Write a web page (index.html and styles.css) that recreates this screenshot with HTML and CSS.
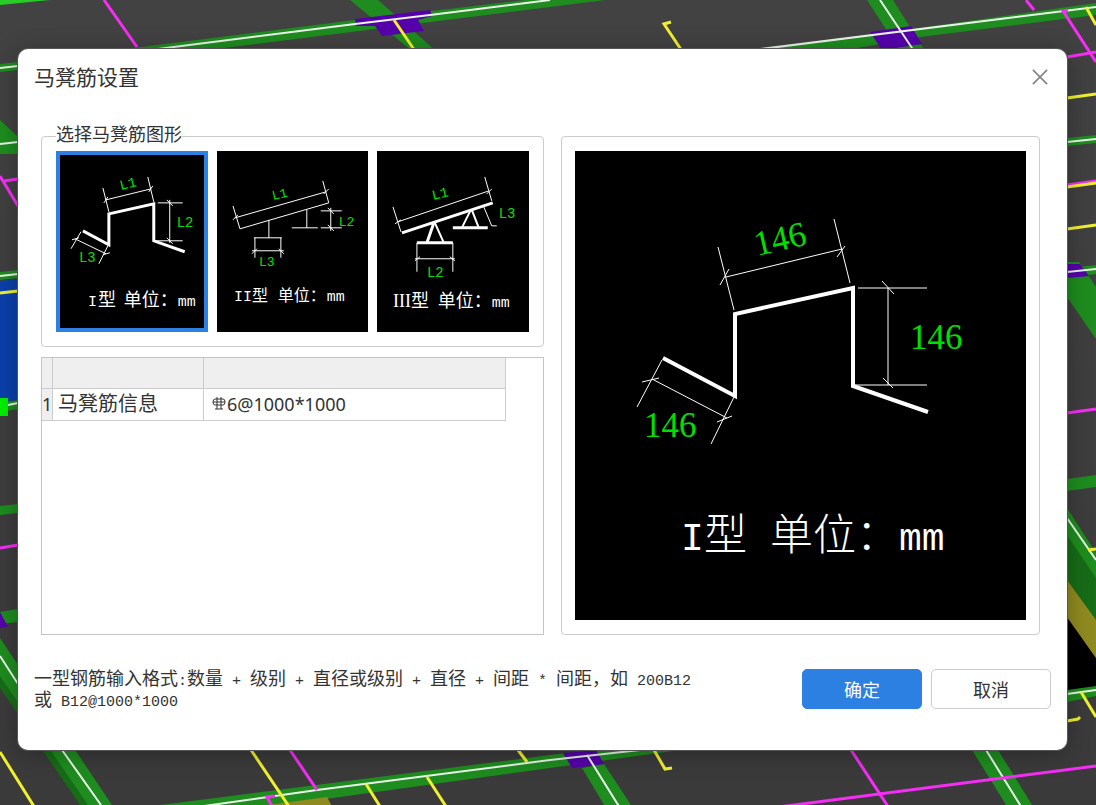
FILE: index.html
```html
<!DOCTYPE html>
<html lang="zh-CN">
<head>
<meta charset="utf-8">
<title>马凳筋设置</title>
<link rel="stylesheet" href="styles.css">
</head>
<body>
<svg class="scene" viewBox="0 0 1096 805" preserveAspectRatio="xMidYMid slice" aria-hidden="true">
  <g class="beam">
    <path d="M0 0H50L0 5Z" class="beam-bright"/>
    <path d="M350 0H378L436 51H412Z"/>
    <path d="M110 51L355 20L525 0H605L375 29L200 51Z"/>
    <path d="M867 0H893L925 51H900Z"/>
    <path d="M745 51L870 35L1096 3V15L920 37L840 51Z"/>
    <path d="M0 64L18 62V70L0 72Z"/>
    <path d="M0 120L18 137V154H0Z"/>
    <path d="M0 272L18 270V278L0 280Z"/>
    <path d="M0 402L18 400V409L0 412Z"/>
    <path d="M0 506L18 504V513L0 515Z"/>
    <path d="M0 612L18 609V622L0 624Z"/>
    <path d="M0 638L112 805H82L0 685Z"/>
    <path d="M145 807L550 755L590 750H680L550 768L340 797L260 808Z"/>
    <path d="M582 768L604 764L633 808H606Z"/>
    <path d="M972 750H998L1034 808H1008Z"/>
    <path d="M1067 138L1096 135V143L1067 146Z"/>
    <path d="M1067 268L1096 265V274L1067 278Z"/>
    <path d="M1067 262H1079L1096 287V339L1067 297Z"/>
    <path d="M1067 479L1096 475V487L1067 491Z"/>
    <path d="M1067 508L1096 553V620L1067 580Z"/>
    <path d="M1067 690L1096 685V696L1067 702Z"/>
  </g>
  <path class="beam-dark" d="M0 676L88 805H80L0 688ZM1067 535L1096 578V620L1067 580Z"/>
  <path fill="#000" d="M1067 617L1096 658V686L1067 690Z"/>
  <path class="olive" d="M1067 580L1096 620V658L1067 617ZM245 808L327 797L333 808Z"/>
  <path fill="#0b40aa" d="M0 281L18 279V400L0 402Z"/>
  <path class="column" d="M355 19L430 10L432 16L418 20L424 31L382 36L375 26H356ZM870 32L911 26L922 44L882 50ZM0 612L8 627L0 628ZM563 753L596 750L604 764L572 768ZM1067 264H1080L1089 276L1067 278Z"/>
  <g class="axis">
    <path d="M150 50L355 24L430 15L550 0M745 51L1096 7M880 0L914 51"/>
    <path d="M0 68L18 66M0 144L18 142M0 276L18 274M8 405L18 403M0 656L18 684M62 750L101 805"/>
    <path d="M190 808L317 790L550 760L640 750M587 755L620 808M986 750L1022 808"/>
    <path d="M1067 142L1096 139M1067 272L1096 269M1067 518L1096 560M1067 694L1096 690"/>
  </g>
  <g class="rebar-magenta">
    <path d="M104 0L137 47M1026 0L1034 10M1068 11H1063L1096 62M1067 57L1096 52M0 176L18 206M4 181L18 179M0 548L18 545"/>
    <path d="M290 750L317 790M275 796L267 797L273 808M851 750L889 808M763 809L1096 766M1067 185L1096 181M1067 413L1096 409"/>
  </g>
  <g class="rebar-yellow">
    <path d="M394 20L415 51M671 22L664 24L682 51M1086 7L1096 25M0 293L18 291M0 752L35 808M251 750L290 808M366 784L381 808"/>
    <path d="M427 777L447 808M518 750L527 762M654 750L665 769L672 768M1067 98L1096 94M1067 187L1096 183M1067 229L1096 225"/>
    <path d="M1067 721L1078 719L1080 717M1081 692L1096 717M1088 550L1096 549"/>
  </g>
  <path fill="#00f000" d="M0 398H8V416H0Z"/>
</svg>

<main class="dialog" role="dialog" aria-labelledby="dialog-title">
  <header class="dialog-header">
    <h1 class="dialog-title" id="dialog-title">马凳筋设置</h1>
    <button class="close" type="button" aria-label="关闭">
      <svg class="close-icon" viewBox="0 0 18 18"><path d="M1 1L17 17M17 1L1 17"/></svg>
    </button>
  </header>

  <div class="dialog-body">
    <div class="left">
      <fieldset class="shapes">
        <legend class="shapes-legend">选择马凳筋图形</legend>
        <div class="shape-list">
          <button class="shape shape-selected" type="button" aria-pressed="true">
            <svg class="drawing" viewBox="0 0 152 181">
              <path class="bar" d="M27 80L53 94V63L98 53V90L129 101"/>
              <path class="dim" d="M47 37L53 61M92 26L98 51M50 49L95 38M48 52L52 46M93 41L97 35M102 52H127M100 90H127M114 49V92M111 49L117 55M111 87L117 93"/>
              <path class="dim" d="M25 81L15 98M52 95L43 113M19 88L50 103M16 89L23 87M47 104L54 102"/>
              <g class="mark">
                <text transform="translate(65 39) rotate(-13)">L1</text>
                <text x="121" y="76">L2</text>
                <text x="23" y="111">L3</text>
              </g>
              <text class="caption" y="155"><tspan class="half" x="32">I</tspan><tspan x="42">型</tspan><tspan x="68">单位：</tspan><tspan class="half" x="122">mm</tspan></text>
            </svg>
          </button>
          <button class="shape" type="button" aria-pressed="false">
            <svg class="drawing" viewBox="0 0 152 181">
              <path class="dim" d="M16 55L23 78L112 52L106 30M18 67L109 41M16 69L21 64M107 43L112 38M52 69V87M37 87H65M38 87V107M64 87V107M35 100H67M35 103L40 98M62 98L67 103"/>
              <path class="dim" d="M90 59V77M75 77H101M104 77H125M104 60H125M114 57V80M111 57L117 63M111 74L117 80"/>
              <g class="mark mark-small">
                <text transform="translate(56 49) rotate(-13)">L1</text>
                <text x="122" y="75">L2</text>
                <text x="42" y="115">L3</text>
              </g>
              <text class="caption caption-small" y="150"><tspan class="half" x="17">II</tspan><tspan x="35">型</tspan><tspan x="61">单位：</tspan><tspan class="half" x="110">mm</tspan></text>
            </svg>
          </button>
          <button class="shape" type="button" aria-pressed="false">
            <svg class="drawing" viewBox="0 0 152 181">
              <path class="bar" d="M25 82L116 52M57 72L50 92M40 92H76M76 77H111"/>
              <path class="dim dim-strong" d="M58 72L67 92M94 59L85 77M95 59L102 77"/>
              <path class="dim" d="M16 56L24 81M108 26L115 50M21 71L112 40M18 73L24 69M110 43L115 38"/>
              <path class="dim" d="M40 92V121M76 92V121M38 108H78M38 110L43 106M73 106L78 110M107 56L115 75H120"/>
              <g class="mark">
                <text transform="translate(56 49) rotate(-13)">L1</text>
                <text x="122" y="67">L3</text>
                <text x="50" y="126">L2</text>
              </g>
              <text class="caption" y="156"><tspan class="roman" x="16">III</tspan><tspan x="34">型</tspan><tspan x="61">单位：</tspan><tspan class="half" x="115">mm</tspan></text>
            </svg>
          </button>
        </div>
      </fieldset>

      <div class="grid-box">
        <table class="grid">
          <colgroup><col class="col-index"><col class="col-name"><col class="col-value"></colgroup>
          <thead><tr><th></th><th></th><th></th></tr></thead>
          <tbody>
            <tr>
              <th class="index" scope="row">1</th>
              <td class="name">马凳筋信息</td>
              <td class="value"><svg class="grade" viewBox="0 0 14 15" role="img" aria-label="C"><path d="M5 1V13M9 1V13M3 13H11M3 3H11Q13 3 13 6Q13 9 11 9H3Q1 9 1 6Q1 3 3 3M1 6H13"/></svg>6@1000*1000</td>
            </tr>
          </tbody>
        </table>
      </div>
    </div>

    <section class="preview" aria-label="图形预览">
      <svg class="drawing" viewBox="0 0 451 469">
        <path class="bar bar-big" d="M88 207L160 245V163L278 137V235L353 261"/>
        <path class="dim" d="M143 96L159 159M259 68L275 132M151 126L267 98M145 134L154 118M262 106L270 95"/>
        <path class="dim" d="M283 137H352M278 234H352M313 137V234M307 130L319 143M308 227L318 237"/>
        <path class="dim" d="M87 209L62 256M159 246L136 293M77 228L152 267M67 231L84 227M142 271L157 265"/>
        <g class="number">
          <text transform="translate(182 105) rotate(-13)">146</text>
          <text x="335" y="198">146</text>
          <text x="69" y="286">146</text>
        </g>
        <text class="caption caption-big" y="399"><tspan class="half" x="106">I</tspan><tspan x="129">型</tspan><tspan x="195">单位：</tspan><tspan class="half" x="324">mm</tspan></text>
      </svg>
    </section>
  </div>

  <footer class="dialog-footer">
    <p class="hint">一型钢筋输入格式<span class="mono">:</span>数量<span class="mono"> + </span>级别<span class="mono"> + </span>直径或级别<span class="mono"> + </span>直径<span class="mono"> + </span>间距<span class="mono"> * </span>间距，如<span class="mono"> 200B12</span><br>或<span class="mono"> B12@1000*1000</span></p>
    <div class="actions">
      <button class="button button-primary" type="button">确定</button>
      <button class="button" type="button">取消</button>
    </div>
  </footer>
</main>
</body>
</html>
```
FILE: styles.css
```css
* {
  box-sizing: border-box;
}

body {
  margin: 0;
  min-height: 100vh;
  padding: 49px 29px 54px 18px;
  position: relative;
  overflow: hidden;
  background: linear-gradient(#424242, #3a3a3a);
  color: #333;
  font-family: "Noto Sans", "Noto Sans CJK SC", sans-serif;
  font-size: 18px;
}

button {
  font: inherit;
  color: inherit;
  cursor: pointer;
}

.scene {
  position: absolute;
  inset: 0;
  width: 100%;
  height: 100%;
}

.beam { fill: #1e8c1e; }
.beam-bright { fill: #27cc27; }
.beam-dark { fill: #176c17; }
.olive { fill: #8f8a20; }
.column { fill: #5500aa; }
.axis { fill: none; stroke: #e8f4e8; stroke-width: 2; }
.rebar-magenta { fill: none; stroke: #f52df5; stroke-width: 3; }
.rebar-yellow { fill: none; stroke: #f0f030; stroke-width: 3; }

.dialog {
  position: relative;
  background: #fff;
  border-radius: 10px;
  box-shadow: 0 0 0 1px #555, 0 4px 24px rgba(0, 0, 0, 0.3);
}

.dialog-header {
  display: flex;
  align-items: center;
  justify-content: space-between;
  height: 56px;
  padding: 0 18px 0 16px;
}

.dialog-title {
  margin: 0;
  font-size: 21px;
  line-height: 28px;
  font-weight: 400;
}

.close {
  display: flex;
  padding: 1px;
  border: 0;
  background: none;
}

.close-icon {
  width: 16px;
  height: 16px;
  fill: none;
  stroke: #888;
  stroke-width: 2;
}

.dialog-body {
  display: grid;
  grid-template-columns: 503fr 479fr;
  gap: 17px;
  padding: 19px 27px 0 23px;
}

.left {
  display: flex;
  flex-direction: column;
  gap: 10px;
  min-width: 0;
}

.shapes {
  min-width: 0;
  margin: 0;
  padding: 3px 14px 14px;
  border: 1px solid #ccc;
  border-radius: 4px;
}

.shapes-legend {
  padding: 0 0 4px;
  line-height: 20px;
}

.shape-list {
  display: grid;
  grid-template-columns: repeat(3, 1fr);
  gap: 9px;
}

.shape {
  display: block;
  padding: 0;
  border: 0;
  background: #000;
}

.shape-selected {
  box-shadow: inset 0 0 0 4px #2c80e2;
}

.drawing {
  display: block;
  width: 100%;
  height: auto;
}

.bar {
  fill: none;
  stroke: #fff;
  stroke-width: 3;
}

.bar-big { stroke-width: 4; }

.dim {
  fill: none;
  stroke: #fff;
  stroke-width: 1;
}

.dim-strong { stroke-width: 2; }

.mark {
  fill: #00e000;
  font-family: "Liberation Mono", monospace;
  font-size: 14px;
}

.mark-small { font-size: 13px; }

.number {
  fill: #00e000;
  font-family: "Liberation Serif", serif;
  font-size: 35px;
}

.caption {
  fill: #fff;
  font-family: "Noto Sans CJK SC", sans-serif;
  font-size: 18px;
}

.half {
  font-family: "Liberation Mono", monospace;
  font-size: 15px;
}

.roman {
  font-family: "Liberation Serif", serif;
  font-size: 18px;
}

.caption-small { font-size: 16px; }

.caption-big {
  font-size: 43px;
  font-weight: 300;
}

.caption-big .half { font-size: 38px; }

.grid-box {
  flex: 1;
  border: 1px solid #c4c4c4;
}

.grid {
  width: 464px;
  table-layout: fixed;
  border-collapse: separate;
  border-spacing: 0;
}

.col-index { width: 11px; }
.col-name { width: 151px; }

.grid th,
.grid td {
  height: 32px;
  padding: 0;
  border-right: 1px solid #ccc;
  border-bottom: 1px solid #ccc;
  font-weight: 400;
  line-height: 24px;
  text-align: left;
  white-space: nowrap;
}

.grid th {
  height: 31px;
  background: #efefef;
}

.grid .name {
  padding-left: 5px;
  font-size: 20px;
}

.grid .value { padding-left: 8px; }

.grade {
  width: 14px;
  height: 15px;
  margin-right: 1px;
  fill: none;
  stroke: #333;
}

.preview {
  margin-top: 12px;
  padding: 14px 13px;
  border: 1px solid #ccc;
  border-radius: 4px;
}

.preview .drawing { background: #000; }

.dialog-footer {
  display: flex;
  align-items: flex-start;
  justify-content: space-between;
  gap: 24px;
  padding: 34px 16px 38px;
}

.hint {
  margin: 0;
  padding-top: 1px;
  line-height: 21px;
  font-family: "Liberation Mono", "Noto Sans CJK SC", monospace;
}

.mono {
  font-size: 15px;
  line-height: 1;
  white-space: pre-wrap;
}

.actions {
  display: flex;
  flex: none;
  gap: 9px;
}

.button {
  width: 120px;
  height: 40px;
  border: 1px solid #ccc;
  border-radius: 5px;
  background: #fff;
}

.button-primary {
  border-color: #2c80e2;
  background: #2c80e2;
  color: #fff;
}
```
